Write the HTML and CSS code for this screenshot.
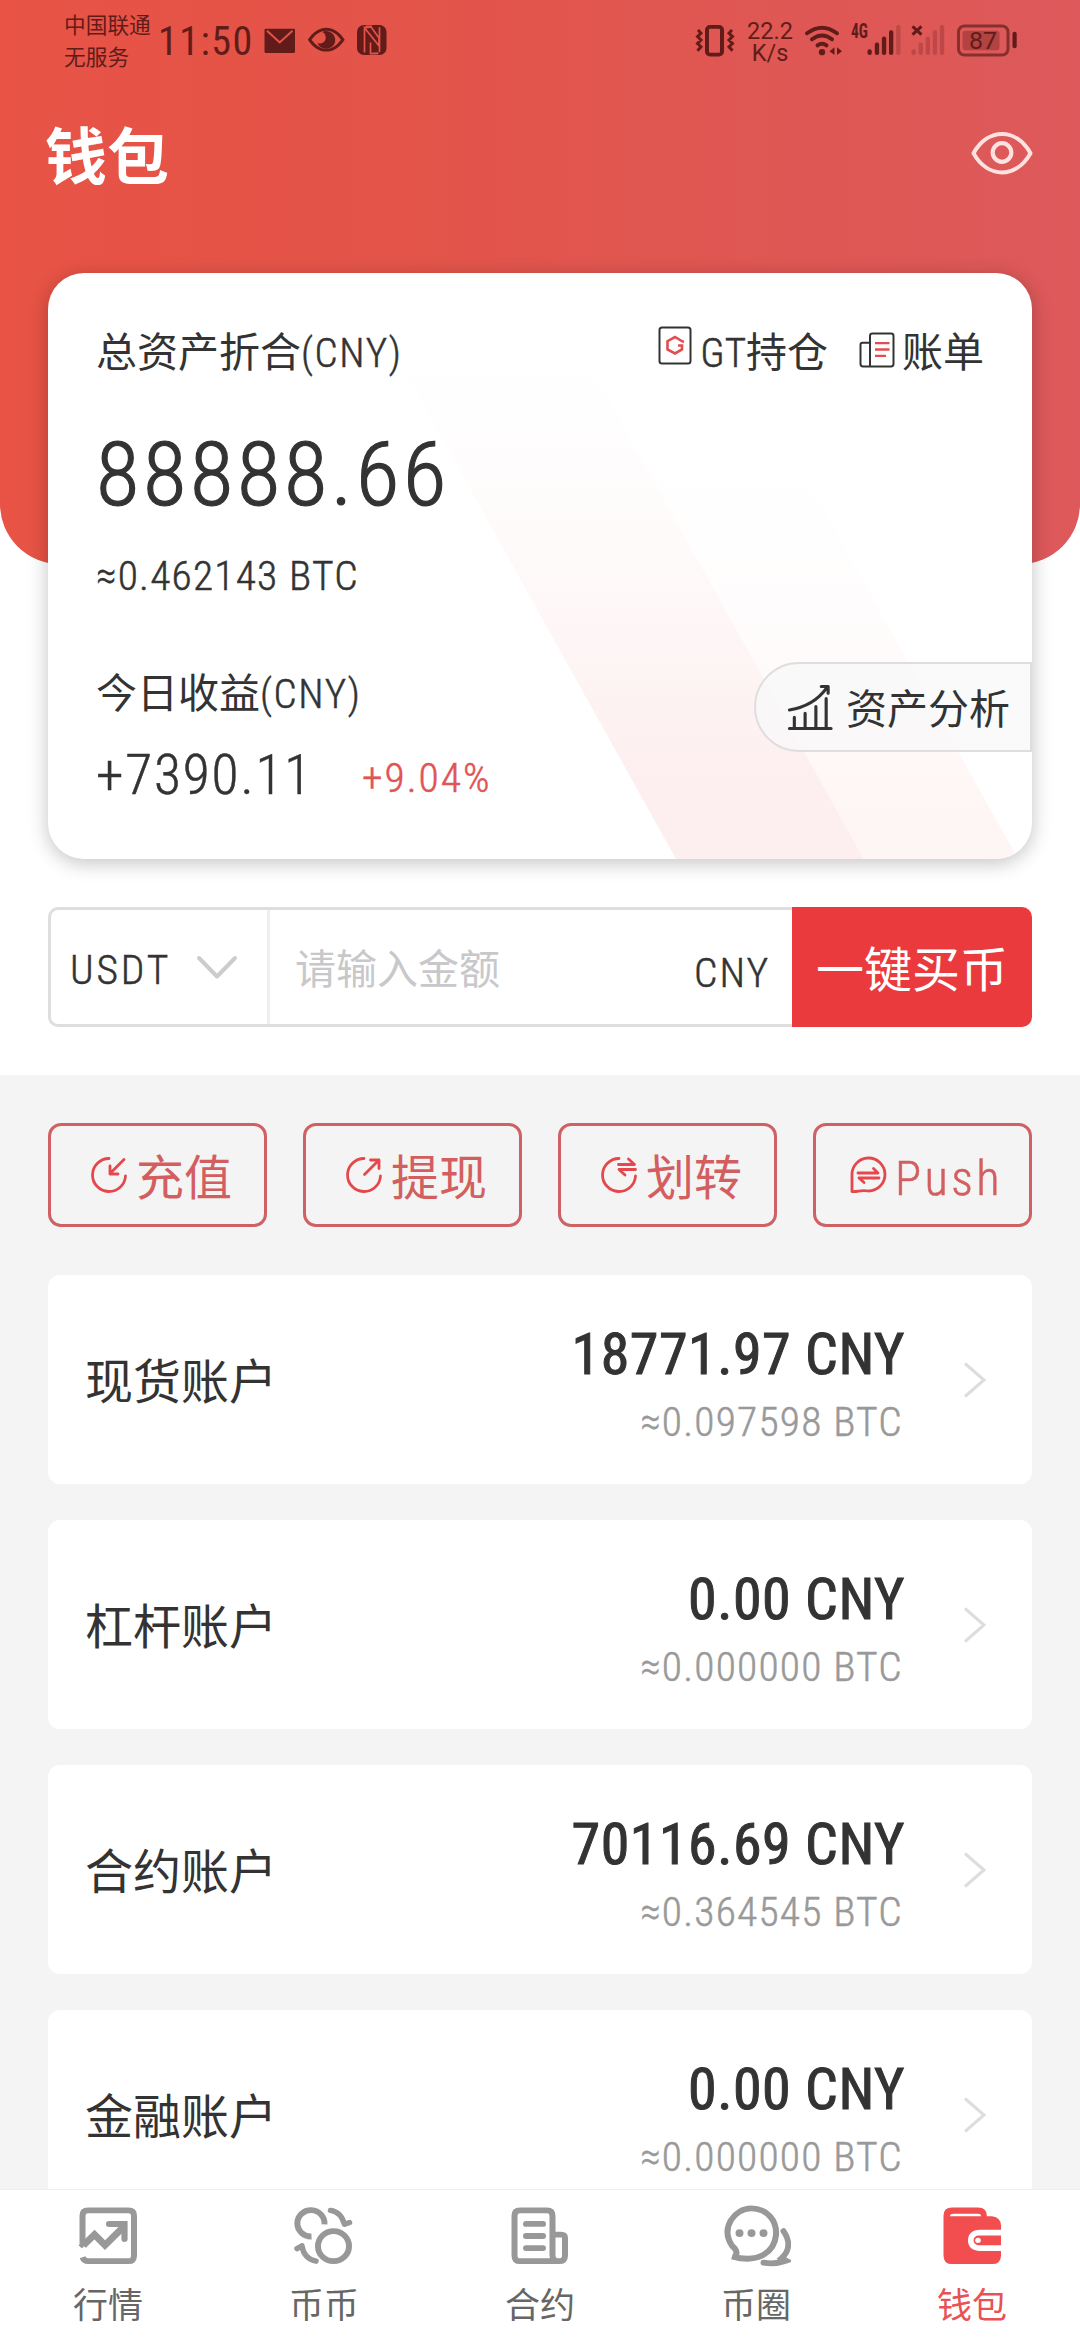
FILE: index.html
```html
<!DOCTYPE html>
<html lang="zh-CN">
<head>
<meta charset="utf-8">
<title>钱包</title>
<link rel="stylesheet" href="styles.css">
</head>
<body>
<div class="screen">
  <main class="content">
    <header class="hero">
      <div class="status">
        <div class="carrier"><span>中国联通</span><span>无服务</span></div>
        <div class="clock">11:50</div>
        <svg class="status-left" width="124" height="33" viewBox="0 0 124 34" preserveAspectRatio="none" fill="#611c1a">
          <rect x=".5" y="6" width="30.500" height="25" rx="1.500"/>
          <path d="M3 8l12.700 12L28.500 8" fill="none" stroke="#e45347" stroke-width="2"/>
          <path d="M43.800 17.200C54 .8 70.500.8 80.700 17.200C70.500 33.500 54 33.500 43.800 17.200Z"/>
          <path d="M47.500 17.200C56 4.800 68.500 4.800 77 17.200C68.500 29.600 56 29.600 47.500 17.200Z" fill="#e45347"/>
          <path d="M61 8.300a9.200 9.200 0 1 1-7.600 12.200c4 2 8.500-.8 8.300-5.500c0-3-1.500-5-3.700-5.600Z"/>
          <rect x="93" y="2" width="29.500" height="31" rx="7"/>
          <path d="M100.500 30.500V5L115 23.500V15.500M101.500 3.500L108 3.500M107.500 31.500H114M100.500 5L107 4L115 15.500M115.500 30V4.500M106.500 20V31.500L114.500 31" fill="none" stroke="#e45347" stroke-width="1.700"/>
        </svg>
        <div class="status-right">
          <svg width="40" height="33" viewBox="0 0 40 34" preserveAspectRatio="none" fill="none" stroke="#611c1a">
            <rect x="12" y="3" width="15" height="28.500" rx="3" stroke-width="4"/>
            <path d="M3 6l3 3.500-3.500 3.500 3.500 3.500-3.500 3.500 3.500 3.500-3.500 4M37 6l-3 3.500 3.500 3.500-3.500 3.500 3.500 3.500-3.500 3.500 3.500 4" stroke-width="3"/>
          </svg>
          <div class="speed"><span>22.2</span><span>K/s</span></div>
          <svg class="signals" width="214" height="33" viewBox="0 0 214 34" preserveAspectRatio="none" fill="#611c1a">
            <g fill="none" stroke="#611c1a" stroke-width="4" stroke-linecap="round">
              <path d="M4 9.500Q19 -2 34 9.500M9 15.800Q19 8 29 15.800M14.500 22Q19 18.500 23.500 22"/>
            </g>
            <circle cx="19" cy="29" r="3.200"/>
            <path d="M26.500 28l5-4v8zM39 28l-5-4v8z"/>
            <rect x="64.500" y="26" width="4.300" height="6" rx="2"/><rect x="71.800" y="19" width="4.300" height="13" rx="2"/><rect x="78.900" y="13" width="4.300" height="19" rx="2"/><rect x="86" y="6.500" width="4.300" height="25.500" rx="2"/>
            <rect x="93.200" y="1" width="4.300" height="31" rx="2" opacity=".25"/>
            <g opacity=".25"><rect x="108.500" y="26" width="4.300" height="6" rx="2"/><rect x="115.600" y="19" width="4.300" height="13" rx="2"/><rect x="122.700" y="13" width="4.300" height="19" rx="2"/><rect x="129.800" y="6.500" width="4.300" height="25.500" rx="2"/><rect x="136.900" y="1" width="4.300" height="31" rx="2"/></g>
            <path d="M109.500 2.500l9 8.500M118.500 2.500l-9 8.500" stroke="#611c1a" stroke-width="3"/>
            <rect x="155.500" y="2" width="49.500" height="30" rx="6" fill="none" stroke="#85302f" stroke-width="3"/>
            <rect x="159.500" y="7" width="37" height="20" rx="3" fill="#b34343"/>
            <rect x="209.500" y="8" width="4.200" height="17" rx="2"/>
            <text class="net" x="48" y="14.500" textLength="17" lengthAdjust="spacingAndGlyphs">4G</text>
            <text class="battery" x="180" y="25.500" text-anchor="middle">87</text>
          </svg>
        </div>
      </div>
      <div class="titlebar">
        <h1>钱包</h1>
        <svg width="62" height="44" viewBox="0 0 62 44" fill="none" stroke="#fde2df" stroke-width="4">
          <path d="M2.500 22.200C17 -3.500 45 -3.500 59.500 22.200C45 47.800 17 47.800 2.500 22.200Z" stroke-linejoin="round"/>
          <circle cx="31" cy="21.500" r="9.300" stroke-width="4.200"/>
        </svg>
      </div>
    </header>

    <section class="summary">
      <svg class="stripes" width="984" height="586" viewBox="0 0 984 586">
        <defs>
          <linearGradient id="s1" x1="0" y1="0" x2="0" y2="1"><stop offset=".1" stop-color="#fdefef" stop-opacity="0"/><stop offset=".45" stop-color="#fdefef" stop-opacity=".3"/><stop offset=".85" stop-color="#fdefef"/></linearGradient>
          <linearGradient id="s2" x1="0" y1="0" x2="0" y2="1"><stop offset="0" stop-color="#fef6f5" stop-opacity="0"/><stop offset=".4" stop-color="#fef6f5" stop-opacity=".3"/><stop offset=".9" stop-color="#fef6f5"/></linearGradient>
        </defs>
        <path d="M313 20H501L816 586H628Z" fill="url(#s1)"/>
        <path d="M590 180H744L970 586H816Z" fill="url(#s2)"/>
      </svg>
      <div class="row top">
        <div class="label">总资产折合<span class="din">(CNY)</span></div>
        <div class="links">
          <a class="link gt"><svg width="34" height="39" viewBox="0 0 34 39" fill="none"><rect x="1.500" y="1.500" width="31" height="36" rx="2.500" stroke="#333" stroke-width="2"/><path d="M24.500 15.500L17 11 9.500 15.200V23.500L17 27.500 24 23.500V19.500H20M24.500 15.500l1.500.5" stroke="#e24d50" stroke-width="2.600"/></svg><span><span class="din">GT</span>持仓</span></a>
          <a class="link bill"><svg width="36" height="36" viewBox="0 0 36 37" preserveAspectRatio="none" fill="none" stroke="#333" stroke-width="2"><path d="M11 35.500V4Q11 1.500 13.500 1.500H32Q34.500 1.500 34.500 4V33Q34.500 35.500 32 35.500H4Q1.500 35.500 1.500 33V13Q1.500 11 3.500 11H11"/><path d="M16 11.500H30.500M16 18H30.500M16 24.500H27" stroke="#e24d50" stroke-width="2.400"/></svg><span>账单</span></a>
        </div>
      </div>
      <div class="total">88888.66</div>
      <div class="btc">≈0.462143 BTC</div>
      <div class="label today">今日收益<span class="din">(CNY)</span></div>
      <div class="gain"><span class="gain-value">+7390.11</span><span class="gain-rate">+9.04%</span></div>
      <a class="analysis"><svg width="47" height="47" viewBox="0 0 47 48" fill="none" stroke="#333" stroke-width="3.200" stroke-linecap="round" stroke-linejoin="round"><path d="M2 45.500H44.500M7 34V45M18 30V45M29 23V45M39.500 15V45"/><path d="M2 26.500Q27 22.500 40 4M34.500 2.500H41.500V9.500"/></svg><span>资产分析</span></a>
    </section>

    <section class="buy">
      <div class="coin"><span>USDT</span><svg width="42" height="25" viewBox="0 0 42 25" fill="none" stroke="#ccc" stroke-width="4" stroke-linecap="round" stroke-linejoin="round"><path d="M3 3L21 21.500 39 3"/></svg></div>
      <div class="amount"><span class="placeholder">请输入金额</span><span class="unit">CNY</span></div>
      <button class="buy-button">一键买币</button>
    </section>

    <section class="accounts">
      <div class="actions">
        <a class="action"><svg width="38" height="38" viewBox="0 0 38 38"><path d="M19 2.500A16.500 16.500 0 1 0 35.500 20"/><path d="M34 3.500L20 17.500M20 10V18H28"/></svg><span>充值</span></a>
        <a class="action"><svg width="38" height="38" viewBox="0 0 38 38"><path d="M19 2.500A16.500 16.500 0 1 0 35.500 20"/><path d="M19.500 18.500L33.500 4.500M25.500 4H34V12.500"/></svg><span>提现</span></a>
        <a class="action"><svg width="38" height="38" viewBox="0 0 38 38"><path d="M19 2.500A16.500 16.500 0 1 0 35.500 20"/><path d="M18.500 8.500H34.500L28.500 3M35.500 13.500H19L25 19"/></svg><span>划转</span></a>
        <a class="action push"><svg width="38" height="38" viewBox="0 0 38 38"><path d="M3 35.500V19A16.500 16.500 0 1 1 19.500 35C12 33.500 9 36 3 35.500Z"/><path d="M9 17H29L24.500 12.500M30 22H10L15 26.500"/></svg><span>Push</span></a>
      </div>
      <div class="list">
        <div class="account"><span class="name">现货账户</span><div class="values"><span class="cny">18771.97 CNY</span><span class="approx">≈0.097598 BTC</span></div><svg class="arrow" width="24" height="36" viewBox="0 0 24 36"><path d="M2 1.500L21 18 2 34.500"/></svg></div>
        <div class="account"><span class="name">杠杆账户</span><div class="values"><span class="cny">0.00 CNY</span><span class="approx">≈0.000000 BTC</span></div><svg class="arrow" width="24" height="36" viewBox="0 0 24 36"><path d="M2 1.500L21 18 2 34.500"/></svg></div>
        <div class="account"><span class="name">合约账户</span><div class="values"><span class="cny">70116.69 CNY</span><span class="approx">≈0.364545 BTC</span></div><svg class="arrow" width="24" height="36" viewBox="0 0 24 36"><path d="M2 1.500L21 18 2 34.500"/></svg></div>
        <div class="account"><span class="name">金融账户</span><div class="values"><span class="cny">0.00 CNY</span><span class="approx">≈0.000000 BTC</span></div><svg class="arrow" width="24" height="36" viewBox="0 0 24 36"><path d="M2 1.500L21 18 2 34.500"/></svg></div>
      </div>
    </section>
  </main>

  <nav class="tabs">
    <a class="tab"><svg width="70" height="62" viewBox="0 0 70 64" preserveAspectRatio="none"><path d="M9.500 40V11Q9.500 5.500 15 5.500H55.500Q61 5.500 61 11V52Q61 58 55.500 58H15Q11 58 9.500 54"/><path d="M8 44L21.500 30.500 32 41.500 49.500 23.500" stroke-width="7"/><path d="M36 19.500H51.500V35" stroke-linecap="round" stroke-width="6.200"/><path d="M5 51.500L12.500 44" stroke="#fff" stroke-width="4"/></svg><span>行情</span></a>
    <a class="tab"><svg width="70" height="62" viewBox="0 0 70 64" preserveAspectRatio="none"><circle cx="44.500" cy="42.500" r="15.500"/><path d="M35.500 20A13.600 13.600 0 1 0 22.500 32.500"/><path d="M41.500 5.500Q52 7 55.500 20L60.500 18M27 58Q14.500 55 13 42L8 45" stroke-linecap="round" stroke-linejoin="round" stroke-width="5.500"/></svg><span>币币</span></a>
    <a class="tab"><svg width="70" height="62" viewBox="0 0 70 64" preserveAspectRatio="none"><path d="M46 58H15Q9.500 58 9.500 52V11Q9.500 5.500 15 5.500H42Q47.500 5.500 47.500 11V52M47.500 30.500H56Q60 30.500 60 34V52Q60 58 54 58Q47.500 58 47.500 52M54 58H43"/><path d="M21 19.500H38M21 32H38M21 44.500H38" stroke-linecap="round"/></svg><span>合约</span></a>
    <a class="tab"><svg width="70" height="62" viewBox="0 0 70 64" preserveAspectRatio="none"><path d="M15 52Q17 47 11 42C-1 23 14 3.500 30 3.500C47 3.500 56 17 55 31C53.500 48 38 61 11 53"/><g fill="#989898" stroke="none"><circle cx="18.500" cy="29" r="4"/><circle cx="30.500" cy="29" r="4"/><circle cx="42.500" cy="29" r="4"/></g><path d="M62.500 27C70 38 68 48 60.500 55L65 57.500Q54 61.500 42.500 59.500" stroke-linecap="round"/></svg><span>币圈</span></a>
    <a class="tab active"><svg width="70" height="62" viewBox="0 0 70 64" preserveAspectRatio="none"><path d="M6.500 11Q6.500 2.500 15 2.500H41Q50 2.500 50 11.500H55Q64 13 64 21V25.500H43Q31 26 31 36.500Q31 47 43 47.500H64V52Q64 61 55 61H15Q6.500 61 6.500 52ZM64 31.500V41.500H41.500A5 5 0 0 1 41.500 31.500ZM13 11.500H44Q44 9 41 9H17Q13 9 13 11.500Z" fill="#f24e50" fill-rule="evenodd" stroke="none"/><circle cx="41" cy="36.500" r="2.800" fill="#fff" stroke="none"/></svg><span>钱包</span></a>
  </nav>
</div>
</body>
</html>
```
FILE: styles.css
```css
* { box-sizing: border-box; }

body {
  margin: 0;
  font-family: "Noto Sans CJK SC", sans-serif;
  font-size: 41px;
  color: #333;
  background: #fff;
}

h1, button { margin: 0; padding: 0; border: 0; font: inherit; }
svg { display: block; flex: none; }

.screen {
  display: flex;
  flex-direction: column;
  width: 1080px;
  height: 2340px;
  overflow: hidden;
}

.content {
  flex: 1;
  min-height: 0;
  display: flex;
  flex-direction: column;
  overflow: hidden;
}

/* Narrow numerals and Latin text */
.din, .total, .btc, .gain, .coin, .unit, .values, .clock, .net, .push {
  font-family: "Roboto Condensed", "Noto Sans CJK SC", sans-serif;
  font-weight: 300;
}

.din, .btc, .gain, .coin, .unit, .approx, .push { -webkit-text-stroke: .5px currentColor; }
.total { -webkit-text-stroke: 1.2px currentColor; }

/* Header */
.hero {
  flex: none;
  height: 564px;
  border-radius: 0 0 60px 60px;
  background: linear-gradient(90deg, #e85345, #e3544a 40%, #e1564f 55%, #dd595b);
}

.status {
  display: flex;
  align-items: flex-start;
  height: 84px;
  padding: 8px 63px 0 64px;
  color: #611c1a;
}

.carrier {
  display: flex;
  flex-direction: column;
  width: 94px;
  font-size: 21.700px;
  line-height: 31.500px;
}

.clock {
  width: 106px;
  font-size: 40px;
  font-weight: 400;
  line-height: 50px;
  padding-top: 9px;
  letter-spacing: 1.500px;
}

.status-left { margin-top: 15px; }

.status-right {
  display: flex;
  margin-left: auto;
  padding-top: 16px;
}

.speed {
  display: flex;
  flex-direction: column;
  align-items: center;
  width: 68px;
  margin-top: -4px;
  padding-left: 2px;
  font-family: Roboto, sans-serif;
  font-size: 23.500px;
  line-height: 22px;
}

.signals { overflow: visible; }
.net { font-size: 20px; font-weight: 700; }
.battery { font-family: Roboto, sans-serif; font-size: 25px; }

.titlebar {
  display: flex;
  align-items: center;
  justify-content: space-between;
  height: 137px;
  padding: 0 47px 0 45px;
  color: #fff;
}

.titlebar h1 { font-size: 62px; font-weight: 700; line-height: 80px; }

/* Asset summary */
.summary {
  position: relative;
  flex: none;
  height: 586px;
  margin: -291px 48px 0;
  padding: 48px 48px 0;
  border-radius: 36px;
  background: #fff;
  box-shadow: 0 4px 20px rgba(0, 0, 0, .24);
  overflow: hidden;
}

.summary > * { position: relative; }
.summary > .stripes { position: absolute; left: 0; top: 0; }

.row { display: flex; justify-content: space-between; }
.label { height: 56px; line-height: 56px; }
.label .din { letter-spacing: 1.600px; }
.links { display: flex; gap: 31px; height: 56px; line-height: 56px; }
.link { display: flex; }
.link.gt svg { margin: 5px 8px 0 0; }
.link.bill svg { margin: 11px 7px 0 0; }

.total { margin-top: 43px; font-size: 89px; line-height: 110px; letter-spacing: 3.700px; }
.btc { height: 52px; margin-top: 20px; font-size: 41.500px; line-height: 52px; letter-spacing: 1.200px; }
.today { margin-top: 60px; }

.gain { display: flex; align-items: center; margin-top: 25px; line-height: 66px; }
.gain-value { width: 266px; font-size: 55.500px; letter-spacing: 1.800px; }
.gain-rate { padding-top: 4px; font-size: 41.500px; line-height: 62px; letter-spacing: 2px; color: #e05456; }

.summary > .analysis {
  position: absolute;
  right: 0;
  top: 389px;
  display: flex;
  align-items: center;
  gap: 12px;
  width: 278px;
  height: 90px;
  padding-left: 31px;
  border: 2px solid #dedede;
  border-radius: 45px 0 0 45px;
  background: rgba(248, 248, 250, .75);
  line-height: 56px;
}

.analysis span { padding-bottom: 2px; }

/* Quick buy */
.buy {
  flex: none;
  display: flex;
  height: 120px;
  margin: 48px;
}

.coin {
  display: flex;
  align-items: center;
  justify-content: space-between;
  width: 219px;
  padding: 0 29px 0 19px;
  border: 3px solid #dedede;
  border-right: 0;
  border-radius: 10px 0 0 10px;
  font-size: 41.500px;
  letter-spacing: 2.800px;
}

.coin span { padding-top: 5px; }

.amount {
  flex: 1;
  display: flex;
  align-items: center;
  justify-content: space-between;
  padding: 0 22px 0 28px;
  border: solid #dedede;
  border-width: 3px 0;
  box-shadow: inset 3px 0 #efefef;
}

.placeholder { padding-bottom: 2px; color: #c8c8cb; }
.unit { padding-top: 11px; font-size: 41.500px; letter-spacing: 1.900px; }

.buy-button {
  width: 240px;
  padding-bottom: 3px;
  border-radius: 0 10px 10px 0;
  background: #ea3a3e;
  color: #fff;
  font-size: 48px;
}

/* Accounts */
.accounts { flex: none; padding: 48px 48px 0; background: #f4f4f4; }

.actions { display: grid; grid-template-columns: repeat(4, 1fr); gap: 36px; }

.action {
  display: flex;
  align-items: center;
  justify-content: center;
  gap: 8px;
  height: 104px;
  padding-left: 7px;
  border: 3px solid #cf6164;
  border-radius: 13px;
  color: #d35e60;
  font-size: 48px;
}

.action span { padding-bottom: 3px; }
.action svg { fill: none; stroke: #e5484c; stroke-width: 2.8; stroke-linecap: round; stroke-linejoin: round; }
.push { font-size: 48.500px; letter-spacing: 3.400px; }
.push span { padding: 7px 0 0; }

.list { display: flex; flex-direction: column; gap: 36px; margin-top: 48px; }

.account {
  display: flex;
  align-items: center;
  height: 209px;
  padding: 0 45px 0 37px;
  border-radius: 12px;
  background: #fff;
}

.name { padding-bottom: 4px; font-size: 48px; }

.values {
  display: flex;
  flex-direction: column;
  align-items: flex-end;
  margin-left: auto;
  padding-top: 14px;
}

.cny { font-size: 58px; font-weight: 400; line-height: 70px; letter-spacing: .5px; -webkit-text-stroke: 1px currentColor; }
.approx { height: 66px; margin-right: 2px; font-size: 41.500px; line-height: 66px; letter-spacing: 1.200px; color: #999; }
.arrow { margin-left: 58px; fill: none; stroke: #ddd; stroke-width: 3; }

/* Bottom navigation */
.tabs {
  flex: none;
  display: grid;
  grid-template-columns: repeat(5, 1fr);
  height: 151px;
  border-top: 1px solid #eee;
  background: #fff;
}

.tab {
  display: flex;
  flex-direction: column;
  align-items: center;
  padding-top: 15px;
  color: #666;
  font-size: 35px;
  line-height: 46px;
}

.tab svg { margin-bottom: 13px; fill: none; stroke: #989898; stroke-width: 6; }
.tab.active { color: #e85255; }
```
